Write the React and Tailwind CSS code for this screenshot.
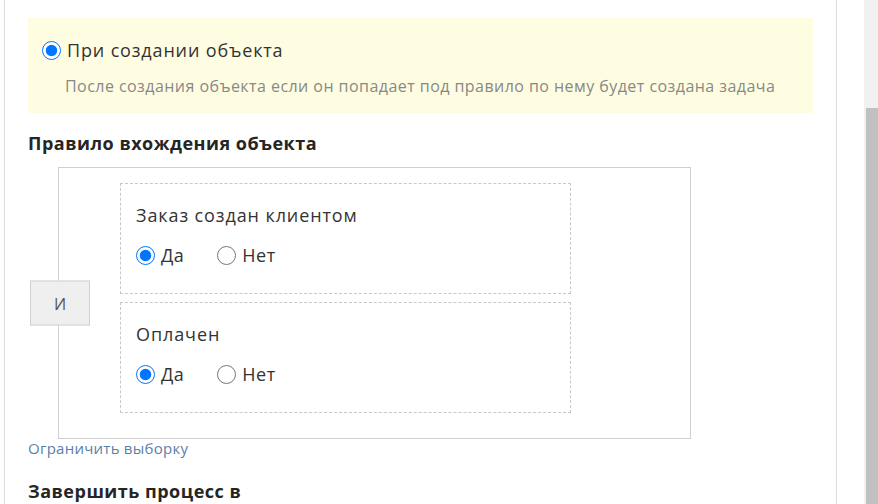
import { useState } from "react";

const FONT = "font-['Open_Sans','Liberation_Sans',sans-serif]";

function Radio({ checked, onChange, label, className = "" }) {
    return (
        <label className={`flex items-center gap-[6px] cursor-pointer ${className}`}>
            <input
                type="radio"
                checked={checked}
                onChange={onChange}
                className="m-0 w-[19px] h-[19px] accent-[#0075ff] cursor-pointer"
            />
            <span>{label}</span>
        </label>
    );
}

function YesNo({ title }) {
    const [value, setValue] = useState(true);
    return (
        <div className="border border-dashed border-[#c8c8c8] h-[111px] pl-[15px] pt-[19px]">
            <div className="text-[18px] tracking-[0.9px] text-[#333] leading-[24px]">{title}</div>
            <div className="flex items-center mt-[16px] text-[18px] tracking-[0.5px] text-[#333] leading-[24px]">
                <Radio checked={value} onChange={() => setValue(true)} label="Да" />
                <Radio checked={!value} onChange={() => setValue(false)} label="Нет" className="ml-[33px]" />
            </div>
        </div>
    );
}

export default function App() {
    const [trigger, setTrigger] = useState(true);

    return (
        <div className={`h-[504px] w-[878px] flex bg-white overflow-hidden ${FONT}`}>
            <div className="w-[4px] shrink-0" />
            <div className="w-[833px] shrink-0 border-x border-[#dedede] pl-[23px] pt-[18px]">
                {/* trigger block */}
                <div className="w-[785px] h-[95px] bg-[#fffde1] pl-[14px] pt-[19px]">
                    <Radio
                        checked={trigger}
                        onChange={() => setTrigger(true)}
                        label="При создании объекта"
                        className="text-[18px] tracking-[0.85px] text-[#333] leading-[26px]"
                    />
                    <div className="pl-[23px] mt-[13px] text-[16px] tracking-[0.45px] text-[#888] leading-[20px]">
                        После создания объекта если он попадает под правило по нему будет создана задача
                    </div>
                </div>

                <div className="mt-[17px] text-[18px] tracking-[0.5px] font-bold text-[#252525] leading-[26px]">
                    Правило вхождения объекта
                </div>

                {/* condition group */}
                <div className="relative ml-[30px] mt-[11px] w-[633px] h-[272px] border border-[#cfcfcf] pl-[61px] pt-[15px]">
                    <button className="absolute left-[-29px] top-1/2 -translate-y-1/2 w-[60px] h-[45px] bg-[#efefef] border border-[#cfcfcf] text-[16px] text-[#555]">
                        И
                    </button>
                    <div className="w-[451px] flex flex-col gap-[8px]">
                        <YesNo title="Заказ создан клиентом" />
                        <YesNo title="Оплачен" />
                    </div>
                </div>

                <a href="#" className="block -mt-[2px] text-[15px] tracking-[0.25px] text-[#5b7fa8] leading-[22px]">
                    Ограничить выборку
                </a>

                <div className="mt-[19px] text-[18px] tracking-[0.5px] font-bold text-[#252525] leading-[26px]">
                    Завершить процесс в
                </div>
            </div>
            <div className="flex-1" />
            {/* scrollbar */}
            <div className="w-[14px] shrink-0 bg-[#f1f1f1] pt-[108px] pl-[2px]">
                <div className="h-full bg-[#c1c1c1]" />
            </div>
        </div>
    );
}
